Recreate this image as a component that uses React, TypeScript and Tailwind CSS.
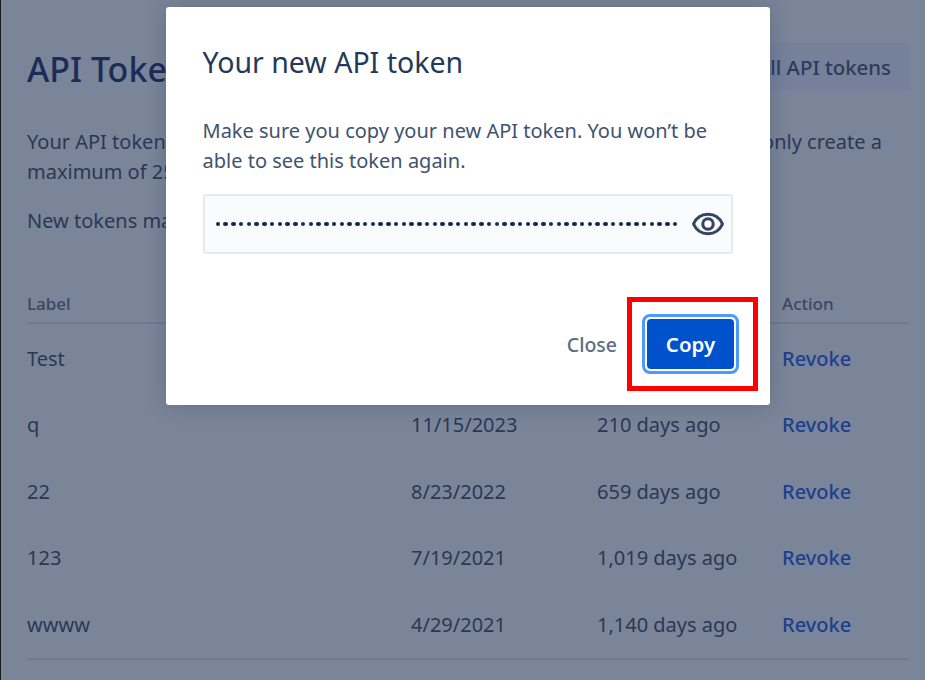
const rows = [
  ["Test", "", ""],
  ["q", "11/15/2023", "210 days ago"],
  ["22", "8/23/2022", "659 days ago"],
  ["123", "7/19/2021", "1,019 days ago"],
  ["wwww", "4/29/2021", "1,140 days ago"],
];

function EyeIcon() {
  return (
    <svg width="38" height="38" viewBox="0 0 32 32" fill="none" stroke="#344563" strokeWidth="2.6" strokeLinejoin="round">
      <path d="M3.8 16C6 11 10.500 7.800 16 7.800S26 11 28.200 16C26 21 21.500 24.200 16 24.200S6 21 3.800 16z" />
      <circle cx="16" cy="16" r="4.400" />
    </svg>
  );
}

export default function App() {
  return (
    <div
      className="relative h-[680px] w-[925px] overflow-hidden bg-[#7a8599] text-[#1e2d4f]"
      style={{ fontFamily: '"Noto Sans", sans-serif' }}
    >
      <div className="flex h-full flex-col border-l border-l-[#1a1a1a] pl-[26px] pr-[16px] pt-[43px]">
        <div className="flex items-start justify-between">
          <h1 className="mt-[2px] text-[34px] leading-[48px] font-medium text-[#1b2c58]">API Tokens</h1>
          <div className="flex h-[48px] w-[190px] items-center justify-end rounded bg-[#75809a] pr-[18px] text-[20.400px] font-medium text-[#2d3b5c]">
            All API tokens
          </div>
        </div>
        <div className="mt-[34px] text-[20px] leading-[30px] text-[#2a3854]">
          <div className="flex justify-between pr-[27px]">
            <span>Your API tokens</span>
            <span>only create a</span>
          </div>
          <div>maximum of 25</div>
        </div>
        <p className="mt-[19px] text-[20px] leading-[30px] text-[#2a3854]">New tokens may</p>
        <div className="mt-[49px] flex h-[39px] items-center border-b-2 border-[#6e7a92] text-[17px] font-medium text-[#3a4763]">
          <span className="w-[384px]">Label</span>
          <span className="w-[186px]">Created</span>
          <span className="w-[185px]">Last used</span>
          <span>Action</span>
        </div>
        <div className="border-b-2 border-[#6e7a92] pb-[1px]">
          {rows.map((r) => (
            <div key={r[0]} className="flex h-[66.5px] items-center pt-[3px] text-[20px] text-[#2a3854]">
              <span className="w-[384px]">{r[0]}</span>
              <span className="w-[186px]">{r[1]}</span>
              <span className="w-[185px]">{r[2]}</span>
              <span className="font-medium text-[#1c3f8f]">Revoke</span>
            </div>
          ))}
        </div>
      </div>

      <div className="absolute left-[166px] top-[7px] flex h-[398px] w-[604px] flex-col rounded-[3px] bg-white pl-[36.500px] pr-[37px] pt-[35px] shadow-[0_0_20px_rgba(30,40,70,0.25)]">
        <h2 className="text-[28.500px] leading-[40px] text-[#253858]">Your new API token</h2>
        <p className="mt-[34px] text-[20px] leading-[30px] text-[#42526e]">
          Make sure you copy your new API token. You won’t be<br />able to see this token again.
        </p>
        <div className="mt-[18px] flex h-[60px] items-center justify-between rounded-[3px] border-2 border-[#e6e8ee] bg-[#fafbfc] pl-[11px] pr-[4px]">
          <div className="flex w-[462px] items-center justify-between">
            {Array.from({ length: 60 }).map((_, i) => (
              <span key={i} className="h-[4.500px] w-[4.500px] rounded-full bg-[#172b4d]" />
            ))}
          </div>
          <EyeIcon />
        </div>
        <div className="mt-[60px] flex items-center justify-end">
          <span className="mt-[2px] text-[19.500px] font-medium text-[#5e6c84]">Close</span>
          <div className="ml-[25px] mr-[-6px] flex h-[60px] w-[97px] items-center justify-center rounded-[8px] border-[3px] border-[#4c9aff] bg-white p-[2px]">
            <div className="flex h-full w-full items-center justify-center rounded-[4px] bg-[#0052cc] text-[20.500px] font-semibold text-white">
              Copy
            </div>
          </div>
        </div>
      </div>

      <div className="absolute left-[627px] top-[297px] h-[94px] w-[131px] border-[5px] border-[#ff0000]" />
    </div>
  );
}
